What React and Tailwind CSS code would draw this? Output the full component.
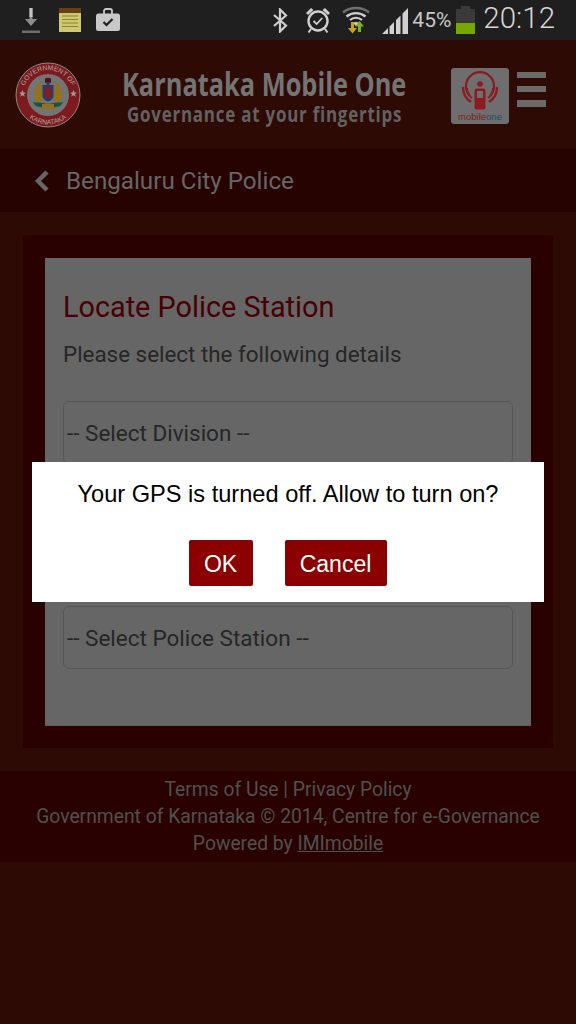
const roboto = "font-['Roboto',sans-serif]";

function DownloadIcon() {
  return (
    <svg width="18" height="25" viewBox="0 0 18 25" className="ml-[22px]">
      <path d="M7.5 0h3v11h4.500L9 18 3 11h4.500z" fill="#8e8e8e" />
      <path d="M7.5 0h3v9h-3z" fill="#c4c4c4" />
      <rect x="0" y="22.500" width="18" height="2.500" fill="#6e6e6e" />
    </svg>
  );
}

function NotesIcon() {
  return (
    <svg width="22" height="24" viewBox="0 0 22 24" className="ml-[19px]">
      <rect width="22" height="24" fill="#cfc872" />
      <rect width="22" height="5" fill="#6b3d12" />
      <path d="M3 8h16M3 11.500h16M3 15h16M3 18.500h16" stroke="#8c8330" strokeWidth="1.200" />
    </svg>
  );
}

function BriefcaseIcon() {
  return (
    <svg width="24" height="24" viewBox="0 0 24 24" className="ml-[15px]">
      <path d="M8 6V3a2 2 0 0 1 2-2h4a2 2 0 0 1 2 2v3" fill="none" stroke="#c8c8c8" strokeWidth="1.800" />
      <rect y="5.500" width="24" height="17.500" rx="2.500" fill="#c8c8c8" />
      <path d="M7.500 14l3 3 6-6" fill="none" stroke="#1f1f1f" strokeWidth="2.200" />
    </svg>
  );
}

function BluetoothIcon() {
  return (
    <svg width="15" height="25" viewBox="0 0 15 25">
      <path d="M1 7l12 10.500L7 23.500V1.500l6 6L1 18" fill="none" stroke="#cfcfcf" strokeWidth="2.200" />
    </svg>
  );
}

function AlarmIcon() {
  return (
    <svg width="26" height="28" viewBox="0 0 26 28" className="ml-[17px]">
      <circle cx="13" cy="15" r="9.500" fill="none" stroke="#cfcfcf" strokeWidth="2.400" />
      <path d="M8.500 15l3.200 3 5.500-6" fill="none" stroke="#cfcfcf" strokeWidth="1.800" />
      <path d="M1 7l5-5 2.500 2-5.500 5zM25 7l-5-5-2.500 2 5.500 5z" fill="#cfcfcf" />
      <path d="M6 23l-2.500 3.500M20 23l2.500 3.500" stroke="#cfcfcf" strokeWidth="2" />
    </svg>
  );
}

function WifiIcon() {
  return (
    <svg width="28" height="28" viewBox="0 0 28 28" className="ml-[11px]">
      <path d="M1 6.500C8 .5 20 .5 27 6.500" fill="none" stroke="#707070" strokeWidth="2.600" />
      <path d="M4.500 10.500c5.500-4.500 13.500-4.500 19 0" fill="none" stroke="#cfcfcf" strokeWidth="2.400" />
      <path d="M8 14c3.500-3 8.500-3 12 0" fill="none" stroke="#cfcfcf" strokeWidth="2.200" />
      <path d="M11 17c2-1.500 4-1.500 6 0l-3 3z" fill="#cfcfcf" />
      <path d="M9 16h3v6h3l-4.500 5.500L6 22h3z" fill="#c9a41a" />
      <path d="M17.500 15l4.500 5.500h-3V26h-3v-5.500h-3z" fill="#7cb518" />
    </svg>
  );
}

function SignalIcon() {
  return (
    <svg width="26" height="27" viewBox="0 0 26 27" className="ml-[12px] self-end mb-[6px]">
      <path d="M0 27L6 21V27zM7.500 27V19.500L12 15V27zM14 27V13L18.500 8.500V27zM20.500 27V6.500L26 1V27z" fill="#d0d0d0" />
    </svg>
  );
}

function BatteryIcon() {
  return (
    <div className="ml-[5px] flex w-[19px] flex-col items-center">
      <div className="h-[3px] w-[9px] bg-[#3a3a3a]" />
      <div className="h-[14px] w-full bg-[#3a3a3a]" />
      <div className="h-[11px] w-full bg-[#76a800]" />
    </div>
  );
}

function StatusBar() {
  return (
    <div className={`flex h-10 items-center bg-[#1f1f1f] ${roboto}`}>
      <DownloadIcon />
      <NotesIcon />
      <BriefcaseIcon />
      <div className="ml-auto flex h-10 items-center pr-[21px]">
        <BluetoothIcon />
        <AlarmIcon />
        <WifiIcon />
        <SignalIcon />
        <span className="ml-[4px] text-[21px] leading-none text-[#c8c8c8]">45%</span>
        <BatteryIcon />
        <span className="ml-[8px] -mt-[3px] text-[29.500px] font-light leading-none text-[#d6d6d6]">20:12</span>
      </div>
    </div>
  );
}

function Emblem() {
  return (
    <svg width="66" height="66" viewBox="0 0 66 66" className="shrink-0">
      <circle cx="33" cy="33" r="32" fill="#7c1a1e" stroke="#8a8a8a" strokeWidth="1" />
      <circle cx="33" cy="33" r="21" fill="#747474" />
      <defs>
        <path id="emblemTop" d="M8 33a25 25 0 0 1 50 0" />
        <path id="emblemBottom" d="M3.500 33a29.500 29.500 0 0 0 59 0" />
      </defs>
      <text fontSize="6.800" fill="#b0a2a2" fontFamily="Liberation Sans, sans-serif">
        <textPath href="#emblemTop" startOffset="50%" textAnchor="middle">GOVERNMENT OF</textPath>
      </text>
      <text fontSize="6.800" fill="#b0a2a2" fontFamily="Liberation Sans, sans-serif">
        <textPath href="#emblemBottom" startOffset="50%" textAnchor="middle">KARNATAKA</textPath>
      </text>
      <path d="M7.500 28l1 2.500 2.500.2-2 1.600.8 2.500-2.300-1.500-2.300 1.500.8-2.500-2-1.600 2.500-.2z" fill="#9a9a9a" />
      <path d="M58.500 28l1 2.500 2.500.2-2 1.600.8 2.500-2.300-1.500-2.300 1.500.8-2.500-2-1.600 2.500-.2z" fill="#9a9a9a" />
      <path d="M20 38c-1.500-5 0-9 2-11l-2-2 2-4 3 1 1 4 1 3v9l-3 2z" fill="#94721c" />
      <path d="M46 38c1.500-5 0-9-2-11l2-2-2-4-3 1-1 4-1 3v9l3 2z" fill="#94721c" />
      <rect x="30" y="16" width="6" height="5" rx="1" fill="#571015" />
      <rect x="31.500" y="20" width="3" height="3" fill="#23406a" />
      <path d="M27.500 23h11v10c0 4-2.500 5.500-5.500 6.500-3-1-5.500-2.500-5.500-6.500z" fill="#23406a" />
      <path d="M29.500 25h7v8c0 2-1.500 3-3.500 3.500-2-.5-3.500-1.500-3.500-3.500z" fill="#7e1d26" />
      <path d="M18 40c4 1 6 0 9 1s9 1 12 0 5 0 9-1c-1 3-4 5-8 5H26c-4 0-7-2-8-5z" fill="#1f5238" />
      <path d="M27 42h12v2.500l2 2.500H25l2-2.500z" fill="#94721c" />
    </svg>
  );
}

function HeaderTitle() {
  return (
    <div className="mt-[2px] ml-[41px] w-[284px] shrink-0 font-['Open_Sans',sans-serif] font-bold text-[#747474]">
      <div className="w-[360px] origin-left scale-x-[0.793] text-[32px] leading-[34px] whitespace-nowrap">Karnataka Mobile One</div>
      <div className="ml-[5px] w-[360px] origin-left scale-x-[0.77] text-[22px] leading-[24px] tracking-[1px] whitespace-nowrap text-[#626262]">Governance at your fingertips</div>
    </div>
  );
}

function MobileOneLogo() {
  return (
    <div className="mt-[3px] ml-[45px] flex h-[56px] w-[58px] shrink-0 flex-col items-center rounded-[3px] bg-[#6e6e6e]">
      <svg width="40" height="40" viewBox="0 0 40 40" className="mt-[3px]">
        <path d="M10 25a14 14 0 1 1 20 0" fill="none" stroke="#8c1a1f" strokeWidth="2.200" />
        <path d="M3 16c0 7 3 12 8 15M37 16c0 7-3 12-8 15" fill="none" stroke="#8c1a1f" strokeWidth="2.400" />
        <path d="M7 17c0 5 2 8 5 10M33 17c0 5-2 8-5 10" fill="none" stroke="#8c1a1f" strokeWidth="1.800" />
        <circle cx="20" cy="13" r="2.800" fill="#8c1a1f" />
        <rect x="14.500" y="17.500" width="11" height="21" rx="2" fill="#8c1a1f" />
        <rect x="17" y="20" width="6" height="7" fill="#6e6e6e" />
      </svg>
      <div className="font-['Liberation_Sans',sans-serif] text-[9.500px] leading-[11px] text-[#7d1f24]">
        mobile<span className="text-[#1d4a75]">one</span>
      </div>
    </div>
  );
}

function MenuIcon() {
  return (
    <div className="-mt-[10px] ml-[8px] flex w-[29px] flex-col gap-[8px]">
      <div className="h-[6px] bg-[#6a6a6a]" />
      <div className="h-[6px] bg-[#6a6a6a]" />
      <div className="h-[7px] bg-[#6a6a6a]" />
    </div>
  );
}

function Header() {
  return (
    <div className="flex h-[109px] items-center bg-[#2e0a05] pl-[15px]">
      <Emblem />
      <HeaderTitle />
      <MobileOneLogo />
      <MenuIcon />
    </div>
  );
}

function SelectBox({ label, className = "" }) {
  return (
    <div className={`flex h-[63px] items-center rounded-[6px] border border-[#565656] pt-[3px] pl-[3px] text-[22.500px] text-[#262626] ${className}`}>
      {label}
    </div>
  );
}

function LocateCard() {
  return (
    <div className="bg-[#2e0a05] px-[23px] pt-[23px] pb-[23px]">
      <div className="bg-[#290200] px-[22px] pt-[23px] pb-[22px]">
        <div className="h-[468px] border-b border-[#5e5e5e] bg-[#666666] px-[18px] pt-[32px]">
          <h1 className="text-[28.800px] leading-[34px] text-[#470003]">Locate Police Station</h1>
          <p className="mt-[15px] text-[22.400px] leading-[30px] text-[#262626]">Please select the following details</p>
          <SelectBox label="-- Select Division --" className="mt-[32px]" />
          <SelectBox label="-- Select Sub Division --" className="mt-[40px]" />
          <SelectBox label="-- Select Police Station --" className="mt-[39px]" />
        </div>
      </div>
    </div>
  );
}

function Footer() {
  return (
    <div className="flex h-[91px] flex-col justify-center bg-[#290200] text-center text-[19.300px] leading-[27px] text-[#505050]">
      <div>Terms of Use | Privacy Policy</div>
      <div>Government of Karnataka © 2014, Centre for e-Governance</div>
      <div>
        Powered by <span className="underline">IMImobile</span>
      </div>
    </div>
  );
}

function GpsDialog() {
  return (
    <div className="absolute left-[32px] top-[462px] h-[140px] w-[512px] bg-white font-['Liberation_Sans',sans-serif]">
      <p className="pt-[18px] text-center text-[23.600px] leading-[28px] text-black">Your GPS is turned off. Allow to turn on?</p>
      <div className="mt-[32px] flex justify-center gap-[32px] pr-[1px] text-[23px] text-white">
        <button className="h-[46px] w-[64px] rounded-[2px] bg-[#8b0000] pt-[2px]">OK</button>
        <button className="h-[46px] w-[102px] rounded-[2px] bg-[#8b0000] pt-[2px]">Cancel</button>
      </div>
    </div>
  );
}

export default function App() {
  return (
    <div className={`relative h-[1024px] w-[576px] overflow-hidden bg-[#2e0a05] ${roboto}`}>
      <StatusBar />
      <Header />
      <div className="flex h-[63px] items-center bg-[#260200] pl-[34px] text-[#666666]">
        <svg width="16" height="22" viewBox="0 0 16 22">
          <path d="M13 2L4 11l9 9" fill="none" stroke="#666666" strokeWidth="4.500" />
        </svg>
        <span className="ml-[16px] pt-[1px] text-[24.200px]">Bengaluru City Police</span>
      </div>
      <LocateCard />
      <Footer />
      <GpsDialog />
    </div>
  );
}
